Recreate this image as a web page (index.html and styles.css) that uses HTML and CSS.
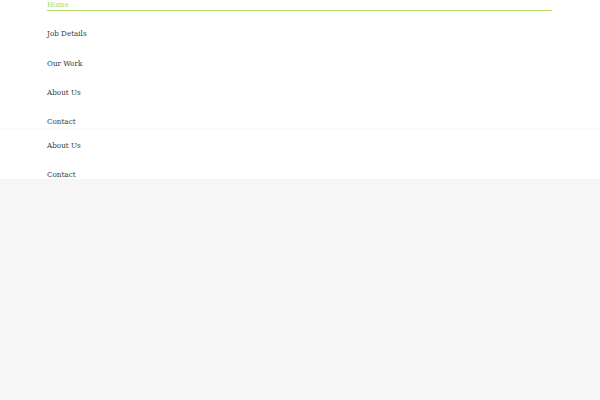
FILE: index.html
```html
<!DOCTYPE html>
<html>
<head>
<meta charset="utf-8">
<link rel="stylesheet" href="styles.css">
</head>
<body>
<header class="menu-main">
  <ul class="nav">
    <li><a class="active" href="#">Home</a></li>
    <li><a href="#">Job Details</a></li>
    <li><a href="#">Our Work</a></li>
    <li><a href="#">About Us</a></li>
    <li><a href="#">Contact</a></li>
  </ul>
</header>
<section class="menu-extra">
  <ul class="nav">
    <li><a href="#">About Us</a></li>
    <li><a href="#">Contact</a></li>
  </ul>
</section>
</body>
</html>
```
FILE: styles.css
```css
html, body {
  margin: 0;
  padding: 0;
  background: #f6f6f6;
  font-family: "DejaVu Serif Condensed", "DejaVu Serif", serif;
  font-size: 8px;
}
.menu-main {
  background: #fff;
  padding: 0 48px 0 47px;
  box-shadow: 0 1px 1px rgba(0,0,0,0.02);
  position: relative;
  z-index: 1;
}
.menu-extra {
  background: #fff;
  padding: 13px 48px 0 47px;
  height: 51px;
  box-sizing: border-box;
  overflow: hidden;
}
.nav {
  list-style: none;
  margin: 0;
  padding: 0;
}
.nav li + li {
  margin-top: 18.3px;
}
.nav a {
  display: block;
  line-height: 9px;
  padding-bottom: 1px;
  border-bottom: 1px solid transparent;
  color: #3a3a3a;
  text-decoration: none;
}
.nav a.active {
  color: #a6d86a;
  border-bottom-color: #b2dd6e;
}
```
